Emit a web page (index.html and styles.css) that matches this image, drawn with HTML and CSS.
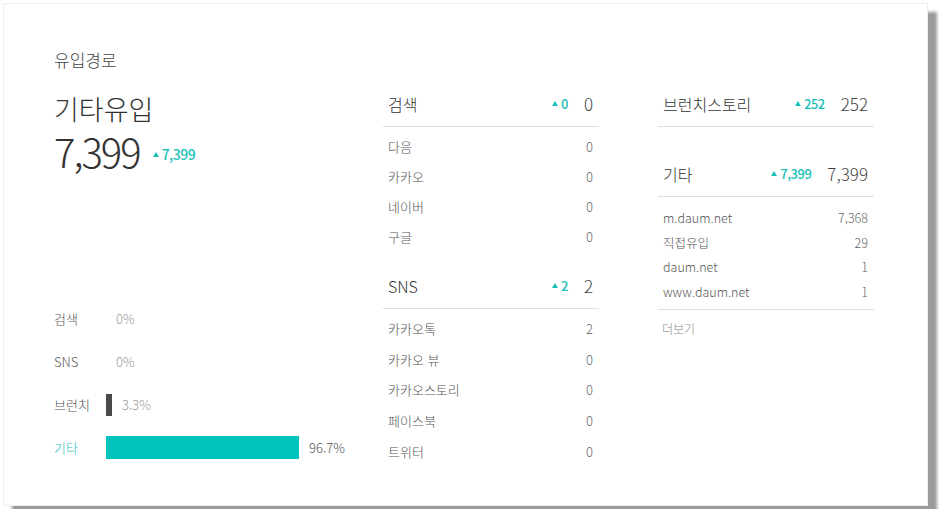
FILE: index.html
```html
<!DOCTYPE html>
<html lang="ko">
<head>
<meta charset="utf-8">
<title>유입경로</title>
<link rel="stylesheet" href="styles.css">
</head>
<body>
<div class="card">
  <h2 class="title">유입경로</h2>
  <div class="columns">
    <section class="summary">
      <div class="summary-name">기타유입</div>
      <div class="summary-total">
        <span class="summary-num">7,399</span>
        <span class="delta delta-lg"><i class="tri"></i>7,399</span>
      </div>
      <ul class="chart">
        <li class="chart-row"><span class="chart-label">검색</span><span class="bar" style="width:0px"></span><span class="pct">0%</span></li>
        <li class="chart-row"><span class="chart-label">SNS</span><span class="bar" style="width:0px"></span><span class="pct">0%</span></li>
        <li class="chart-row"><span class="chart-label">브런치</span><span class="bar bar-dark" style="width:6px"></span><span class="pct">3.3%</span></li>
        <li class="chart-row is-active"><span class="chart-label">기타</span><span class="bar bar-teal" style="width:193px"></span><span class="pct">96.7%</span></li>
      </ul>
    </section>

    <section class="group-col">
      <div class="group">
        <div class="group-head"><span class="group-name">검색</span><span class="delta"><i class="tri"></i>0</span><span class="group-val">0</span></div>
        <ul class="list">
          <li><span>다음</span><span class="num">0</span></li>
          <li><span>카카오</span><span class="num">0</span></li>
          <li><span>네이버</span><span class="num">0</span></li>
          <li><span>구글</span><span class="num">0</span></li>
        </ul>
      </div>
      <div class="group">
        <div class="group-head"><span class="group-name">SNS</span><span class="delta"><i class="tri"></i>2</span><span class="group-val">2</span></div>
        <ul class="list list-sns">
          <li><span>카카오톡</span><span class="num">2</span></li>
          <li><span>카카오 뷰</span><span class="num">0</span></li>
          <li><span>카카오스토리</span><span class="num">0</span></li>
          <li><span>페이스북</span><span class="num">0</span></li>
          <li><span>트위터</span><span class="num">0</span></li>
        </ul>
      </div>
    </section>

    <section class="group-col">
      <div class="group group-brunch">
        <div class="group-head"><span class="group-name">브런치스토리</span><span class="delta"><i class="tri"></i>252</span><span class="group-val">252</span></div>
      </div>
      <div class="group">
        <div class="group-head"><span class="group-name">기타</span><span class="delta"><i class="tri"></i>7,399</span><span class="group-val">7,399</span></div>
        <ul class="list list-small">
          <li><span>m.daum.net</span><span class="num">7,368</span></li>
          <li><span>직접유입</span><span class="num">29</span></li>
          <li><span>daum.net</span><span class="num">1</span></li>
          <li><span>www.daum.net</span><span class="num">1</span></li>
        </ul>
        <div class="more">더보기</div>
      </div>
    </section>
  </div>
</div>
</body>
</html>
```

FILE: styles.css
```css
* { box-sizing: border-box; }
html, body { margin: 0; padding: 0; background: #fff; }
body {
  padding: 3px;
  font-family: "Noto Sans CJK KR", "Noto Sans", sans-serif;
  color: #555;
}
ul { list-style: none; margin: 0; padding: 0; }

.card {
  width: 925px;
  height: 503px;
  border: 1px solid #eeeeee;
  background: #fff;
  box-shadow: 9px 9px 3px #9a9a9a;
  padding: 44px 0 0 50px;
}
.title {
  margin: 0;
  font-size: 17px;
  font-weight: 300;
  line-height: 24px;
  color: #444;
}
.columns {
  display: grid;
  grid-template-columns: 270px 216px 216px;
  column-gap: 59px;
  margin-top: 16px;
}

/* summary column */
.summary { padding-top: 5px; }
.summary-name {
  font-size: 27px;
  line-height: 32px;
  font-weight: 300;
  color: #333;
}
.summary-total {
  display: flex;
  align-items: center;
  height: 48px;
  margin-top: 2px;
}
.summary-num {
  font-size: 40px;
  line-height: 46px;
  font-weight: 300;
  color: #333;
  letter-spacing: -2px;
}
.delta {
  display: inline-flex;
  align-items: center;
  color: #19bfb9;
  font-size: 13px;
  font-weight: 500;
  letter-spacing: -0.5px;
}
.delta-lg { font-size: 14px; margin-left: 13px; margin-top: 6px; }
.tri {
  width: 0; height: 0;
  border-left: 3px solid transparent;
  border-right: 3px solid transparent;
  border-bottom: 5px solid #19bfb9;
  margin-right: 3px;
}

.chart { margin-top: 122px; }
.chart-row {
  display: flex;
  align-items: center;
  height: 43px;
  font-size: 13px;
  font-weight: 300;
  color: #555;
  white-space: nowrap;
}
.chart-label { width: 52px; flex-shrink: 0; }
.bar { height: 22px; margin-right: 10px; flex-shrink: 0; }
.bar-dark { background: #4a4a4a; }
.bar-teal { background: #00c4bc; height: 23px; }
.pct { color: #999; font-size: 13px; flex-shrink: 0; }
.is-active .chart-label { color: #19bfb9; }
.is-active .pct { color: #555; }

/* group columns */
.group-head {
  display: flex;
  align-items: center;
  height: 39px;
  padding: 4px 6px 11px 5px;
  border-bottom: 1px solid #dedede;
}
.group-name {
  flex: 1;
  font-size: 16px;
  line-height: 24px;
  font-weight: 300;
  color: #333;
}
.group-val {
  margin-left: 16px;
  font-size: 17px;
  font-weight: 300;
  color: #444;
}
.list { padding: 4px 6px 19px 5px; }
.list li {
  display: flex;
  justify-content: space-between;
  align-items: center;
  height: 30px;
  font-size: 13px;
  font-weight: 300;
  color: #555;
}
.list .num { color: #666; }
.list-sns li { height: 30.8px; }
.group-brunch { margin-bottom: 31px; }
.list-small { padding: 8px 6px 5px 5px; border-bottom: 1px solid #dedede; }
.list-small li { height: 24.8px; font-size: 12.5px; }
.more {
  padding: 10px 6px 0 4px;
  font-size: 12px;
  line-height: 18px;
  font-weight: 300;
  color: #888;
}
```
